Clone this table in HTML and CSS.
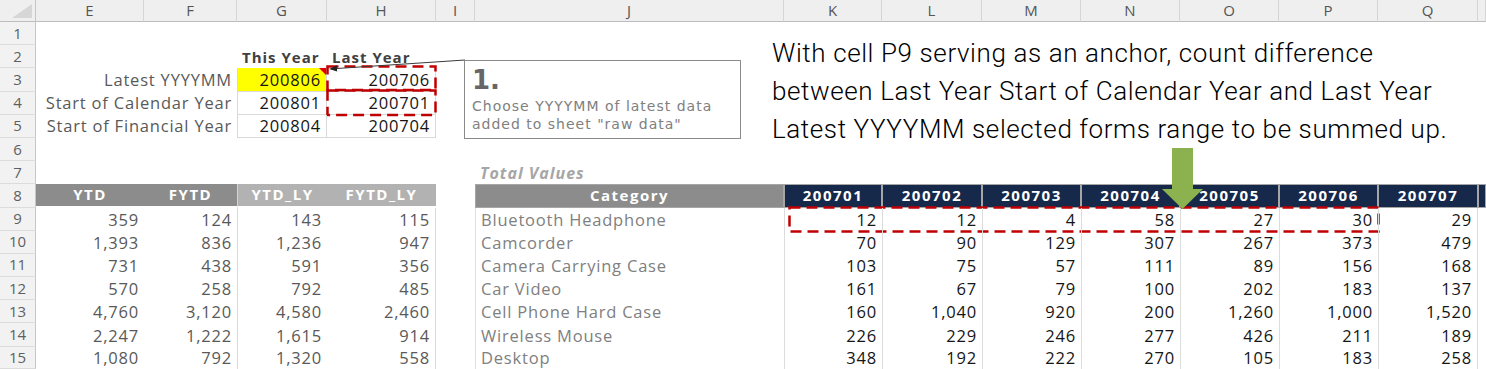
FILE: index.html
```html
<!DOCTYPE html>
<html lang="en">
<head>
<meta charset="utf-8">
<title>Sheet</title>
<link rel="stylesheet" href="styles.css">
</head>
<body>
<div class="sheet">
  <div class="grid">
    <!-- column headers -->
    <div class="corner"><svg width="20" height="14" viewBox="0 0 20 14"><polygon points="0,14 20,0 20,14" fill="#d6d6d6"/></svg></div>
    <div class="col">E</div><div class="col">F</div><div class="col">G</div><div class="col">H</div><div class="col">I</div><div class="col">J</div><div class="col">K</div><div class="col">L</div><div class="col">M</div><div class="col">N</div><div class="col">O</div><div class="col">P</div><div class="col">Q</div><div class="col"></div>

    <!-- row 1 -->
    <div class="rn">1</div><div class="s14"></div>

    <!-- row 2 -->
    <div class="rn">2</div><div class="s2"></div><div class="yr">This Year</div><div class="yr">Last Year</div><div class="s10"></div>

    <!-- row 3 -->
    <div class="rn">3</div>
    <div class="s2 lbl">Latest YYYYMM</div>
    <div class="inp gl yellow">200806<span class="note"></span></div>
    <div class="inp">200706<span class="dash dash-h3"><svg width="111" height="28"><rect x="1.5" y="1.5" width="108" height="23.5" class="dash-rect"/></svg></span></div>
    <div class="s10"></div>

    <!-- row 4 -->
    <div class="rn">4</div>
    <div class="s2 lbl">Start of Calendar Year</div>
    <div class="inp gl">200801</div>
    <div class="inp">200701<span class="dash dash-h4"><svg width="111" height="28"><rect x="1.5" y="1.5" width="108" height="24.6" class="dash-rect"/></svg></span></div>
    <div class="s10"></div>

    <!-- row 5 -->
    <div class="rn">5</div>
    <div class="s2 lbl">Start of Financial Year</div>
    <div class="inp gl">200804</div>
    <div class="inp">200704</div>
    <div class="s10"></div>

    <!-- row 6 -->
    <div class="rn">6</div><div class="s14"></div>

    <!-- row 7 -->
    <div class="rn">7</div><div class="s5"></div><div class="total">Total Values</div><div class="s8"></div>

    <!-- row 8 -->
    <div class="rn">8</div>
    <div class="hd dark">YTD</div><div class="hd dark">FYTD</div><div class="hd light gl">YTD_LY</div><div class="hd light">FYTD_LY</div>
    <div></div>
    <div class="hd cathd">Category</div>
    <div class="hd date">200701</div><div class="hd date">200702</div><div class="hd date">200703</div><div class="hd date">200704</div><div class="hd date">200705</div><div class="hd date">200706</div><div class="hd date">200707</div><div class="hd date"></div>

    <!-- row 9 -->
    <div class="rn">9</div>
    <div class="ng">359</div><div class="ng">124</div><div class="ng gl">143</div><div class="ng gr">115</div><div></div>
    <div class="cat">Bluetooth Headphone</div>
    <div class="nk">12<span class="dash dash-range"><svg width="593" height="28"><rect x="1.5" y="1.5" width="589" height="24" class="dash-rect"/></svg></span></div><div class="nk">12</div><div class="nk">4</div><div class="nk">58</div><div class="nk">27</div><div class="nk">30</div><div class="nk last">29</div><div></div>

    <!-- row 10 -->
    <div class="rn">10</div>
    <div class="ng">1,393</div><div class="ng">836</div><div class="ng gl">1,236</div><div class="ng gr">947</div><div></div>
    <div class="cat">Camcorder</div>
    <div class="nk">70</div><div class="nk">90</div><div class="nk">129</div><div class="nk">307</div><div class="nk">267</div><div class="nk">373</div><div class="nk last">479</div><div></div>

    <!-- row 11 -->
    <div class="rn">11</div>
    <div class="ng">731</div><div class="ng">438</div><div class="ng gl">591</div><div class="ng gr">356</div><div></div>
    <div class="cat">Camera Carrying Case</div>
    <div class="nk">103</div><div class="nk">75</div><div class="nk">57</div><div class="nk">111</div><div class="nk">89</div><div class="nk">156</div><div class="nk last">168</div><div></div>

    <!-- row 12 -->
    <div class="rn">12</div>
    <div class="ng">570</div><div class="ng">258</div><div class="ng gl">792</div><div class="ng gr">485</div><div></div>
    <div class="cat">Car Video</div>
    <div class="nk">161</div><div class="nk">67</div><div class="nk">79</div><div class="nk">100</div><div class="nk">202</div><div class="nk">183</div><div class="nk last">137</div><div></div>

    <!-- row 13 -->
    <div class="rn">13</div>
    <div class="ng">4,760</div><div class="ng">3,120</div><div class="ng gl">4,580</div><div class="ng gr">2,460</div><div></div>
    <div class="cat">Cell Phone Hard Case</div>
    <div class="nk">160</div><div class="nk">1,040</div><div class="nk">920</div><div class="nk">200</div><div class="nk">1,260</div><div class="nk">1,000</div><div class="nk last">1,520</div><div></div>

    <!-- row 14 -->
    <div class="rn">14</div>
    <div class="ng">2,247</div><div class="ng">1,222</div><div class="ng gl">1,615</div><div class="ng gr">914</div><div></div>
    <div class="cat">Wireless Mouse</div>
    <div class="nk">226</div><div class="nk">229</div><div class="nk">246</div><div class="nk">277</div><div class="nk">426</div><div class="nk">211</div><div class="nk last">189</div><div></div>

    <!-- row 15 -->
    <div class="rn">15</div>
    <div class="ng">1,080</div><div class="ng">792</div><div class="ng gl">1,320</div><div class="ng gr">558</div><div></div>
    <div class="cat">Desktop</div>
    <div class="nk">348</div><div class="nk">192</div><div class="nk">222</div><div class="nk">270</div><div class="nk">105</div><div class="nk">183</div><div class="nk last">258</div><div></div>
  </div>

  <!-- floating shapes over the sheet -->
  <svg class="connector" width="150" height="20" viewBox="0 0 150 20">
    <line x1="145" y1="5" x2="14" y2="13.7" stroke="#3a3a3a" stroke-width="1"/>
    <polygon points="9,14 16.8,10.4 17.2,16.5" fill="#222"/>
  </svg>

  <div class="callout">
    <div class="step">1.</div>
    <div class="step-text">Choose YYYYMM of latest data<br>added to sheet "raw data"</div>
  </div>

  <div class="annotation">With cell P9 serving as an anchor, count difference<br>between Last Year Start of Calendar Year and Last Year<br>Latest YYYYMM selected forms range to be summed up.</div>

  <svg class="down-arrow" width="41" height="61" viewBox="0 0 41 61">
    <path d="M10 0 H31 V41 H41 L20.5 61 L0 41 H10 Z" fill="#8bb24f"/>
  </svg>
</div>
</body>
</html>
```

FILE: styles.css
```css
* {
  box-sizing: border-box;
  margin: 0;
  padding: 0;
}

html, body {
  width: 1486px;
  height: 369px;
  overflow: hidden;
  background: #ffffff;
}

.sheet {
  position: relative;
  width: 1486px;
  height: 369px;
  overflow: hidden;
  font-family: "Open Sans", "Liberation Sans", sans-serif;
}

.grid {
  display: grid;
  grid-template-columns: 36px 108px 93px 90px 109px 39px 309px 98px 100px 99px 99px 99px 99px 100px 1fr;
  grid-template-rows: 22px repeat(14, 23.2px) 22px;
  font-size: 16.5px;
  line-height: 1.2;
  letter-spacing: 0.8px;
}

.grid > div {
  display: flex;
  align-items: center;
  white-space: nowrap;
  min-width: 0;
}

/* spans */
.s2 { grid-column: span 2; }
.s5 { grid-column: span 5; }
.s8 { grid-column: span 8; }
.s10 { grid-column: span 10; }
.s14 { grid-column: span 14; }

/* headers */
.corner {
  background: #efefef;
  border-right: 1px solid #c6c6c6;
  border-bottom: 1px solid #bdbdbd;
  justify-content: flex-end;
  align-items: flex-end !important;
  padding: 0 3px 3px 0;
}

.col {
  background: #efefef;
  border-right: 1px solid #d5d5d5;
  border-bottom: 1px solid #bdbdbd;
  justify-content: center;
  font-size: 15px;
  letter-spacing: 0;
  color: #555555;
  padding-bottom: 1px;
}

.rn {
  background: #f2f2f2;
  border-right: 1px solid #c6c6c6;
  border-bottom: 1px solid #dcdcdc;
  justify-content: center;
  font-size: 15px;
  letter-spacing: 0;
  color: #5f5f5f;
  padding-bottom: 1px;
}

/* top parameter block */
.yr {
  font-size: 15px;
  font-weight: 700;
  letter-spacing: 1px;
  color: #404040;
  padding-left: 5px;
  padding-top: 1px;
}

.lbl {
  justify-content: flex-end;
  padding: 1px 5px 1px 0;
  color: #595959;
}

.inp {
  position: relative;
  justify-content: flex-end;
  padding: 1px 5px 0 0;
  color: #151515;
  border-right: 1px solid #d9d9d9;
  border-bottom: 1px solid #d9d9d9;
}

.gl { border-left: 1px solid #d9d9d9; }
.gr { border-right: 1px solid #d9d9d9; }

.yellow { background: #ffff00; }

.note {
  position: absolute;
  top: 0;
  right: 0;
  width: 0;
  height: 0;
  border-top: 7px solid #e00000;
  border-left: 7px solid transparent;
}

/* dashed selection marks */
.dash {
  position: absolute;
  left: -1px;
  top: -3px;
  line-height: 0;
}

.dash svg { overflow: visible; }

.dash-rect {
  fill: none;
  stroke: #c00000;
  stroke-width: 2.5;
  stroke-dasharray: 11 6;
}

.dash-range {
  left: 3px;
  top: -2px;
}

/* row 7 */
.total {
  font-size: 16px;
  font-weight: 700;
  font-style: italic;
  letter-spacing: 1px;
  color: #a6a6a6;
  padding-left: 5px;
  padding-top: 1px;
}

/* row 8 header */
.hd {
  justify-content: center;
  color: #ffffff;
  font-size: 15px;
  font-weight: 700;
  letter-spacing: 1.5px;
}

.hd.dark {
  background: #8c8c8c;
  border-bottom: 2px solid #ffffff;
  padding-bottom: 1px;
}

.hd.light {
  background: #b2b2b2;
  border-bottom: 2px solid #ffffff;
  padding-bottom: 1px;
}

.hd.light.gl { border-left: 1px solid #d4d4d4; }

.hd.cathd {
  background: #8c8c8c;
  border: 1px solid #a6a6a6;
  padding-bottom: 1px;
}

.hd.date {
  background: #16294b;
  border: 1px solid #a6a6a6;
  padding-bottom: 1px;
}

/* data rows */
.ng {
  justify-content: flex-end;
  padding-right: 5px;
  padding-top: 1px;
  color: #595959;
}

.cat {
  padding-left: 5px;
  padding-top: 1px;
  color: #808080;
  border-left: 1px solid #dedede;
}

.nk {
  position: relative;
  justify-content: flex-end;
  padding-right: 5px;
  padding-top: 1px;
  color: #151515;
  border-left: 1px solid #dcdcdc;
}

.nk.last { border-right: 1px solid #dcdcdc; }

/* floating shapes */
.connector {
  position: absolute;
  left: 320px;
  top: 55px;
}

.callout {
  position: absolute;
  left: 464px;
  top: 60px;
  width: 277px;
  height: 79px;
  border: 1px solid #8a8a8a;
  background: #ffffff;
  padding: 4px 7px;
  font-family: "DejaVu Sans", Verdana, sans-serif;
}

.step {
  font-size: 26px;
  font-weight: 700;
  line-height: 30px;
  color: #666666;
}

.step-text {
  margin-top: 2px;
  font-size: 14px;
  line-height: 18px;
  letter-spacing: 1px;
  color: #808080;
  white-space: nowrap;
}

.annotation {
  position: absolute;
  left: 772px;
  top: 34px;
  font-family: Roboto, "Liberation Sans", sans-serif;
  font-weight: 300;
  font-size: 26px;
  line-height: 38px;
  letter-spacing: 0.6px;
  color: #000000;
  white-space: nowrap;
}

.down-arrow {
  position: absolute;
  left: 1162px;
  top: 148px;
}
```
